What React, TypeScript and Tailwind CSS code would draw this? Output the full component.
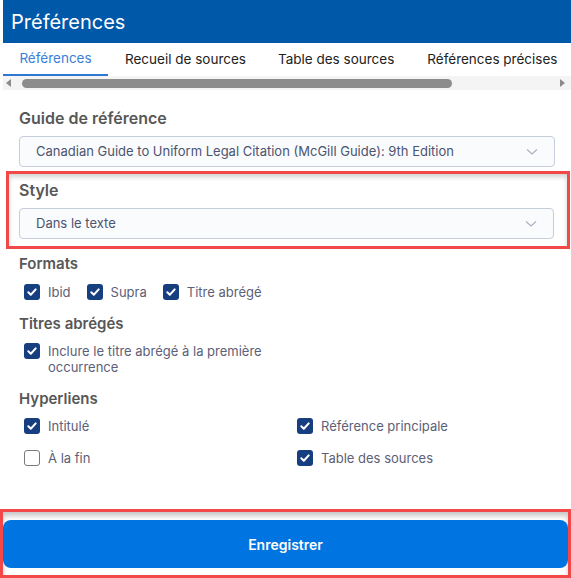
import React from "react";

function Check({ checked }: { checked: boolean }) {
  if (!checked)
    return <span className="block w-[16px] h-[16px] rounded-[3px] border border-[#7a7a7a] bg-white shrink-0" />;
  return (
    <span className="w-[16px] h-[16px] rounded-[3px] bg-[#173f80] shrink-0 flex items-center justify-center">
      <svg width="12" height="12" viewBox="0 0 12 12">
        <path d="M2.3 6.3 L4.8 8.7 L9.7 3.4" fill="none" stroke="white" strokeWidth="2" strokeLinecap="round" strokeLinejoin="round" />
      </svg>
    </span>
  );
}

function CB({ checked, label, className = "" }: { checked: boolean; label: React.ReactNode; className?: string }) {
  return (
    <label className={"flex items-start gap-[8px] text-[13px] leading-[16px] text-[#5c6078] " + className}>
      <span className="block shrink-0"><Check checked={checked} /></span>
      <span>{label}</span>
    </label>
  );
}

function Select({ value }: { value: string }) {
  return (
    <div className="h-[31px] rounded-[4px] border border-[#c6cedb] bg-[#fafbfc] flex items-center justify-between pl-[16px] pr-[16px] text-[13px] text-[#4b5470]">
      <span>{value}</span>
      <svg width="12" height="8" viewBox="0 0 12 8">
        <path d="M1 1.5 L6 6 L11 1.5" fill="none" stroke="#a8b0bf" strokeWidth="1.2" />
      </svg>
    </div>
  );
}

export default function App() {
  return (
    <div className="w-[571px] h-[578px] bg-white flex flex-col overflow-hidden" style={{ fontFamily: "Inter, 'Noto Sans', sans-serif" }}>
      <div className="ml-[3px] h-[43px] bg-[#0058a8] flex items-center pl-[8px] text-white text-[20px] leading-none">
        Préférences
      </div>
      <div className="ml-[3px] h-[33px] flex items-stretch text-[13.5px] text-[#222]">
        <div className="w-[105px] flex items-center justify-center text-[#3b80d8] border-b-2 border-[#2f78d2]">Références</div>
        <div className="ml-[17px] flex items-center">Recueil de sources</div>
        <div className="ml-[32px] flex items-center">Table des sources</div>
        <div className="ml-[33px] flex items-center">Références précises</div>
      </div>
      <div className="ml-[3px] h-[14px] bg-[#f4f4f4] flex items-center px-[2px]">
        <svg width="6" height="8" viewBox="0 0 6 8" className="ml-[1px]"><path d="M5 0 L0 4 L5 8 Z" fill="#8a8a8a" /></svg>
        <div className="ml-[10px] w-[430px] h-[9px] rounded-full bg-[#8c8c8c]" />
        <div className="flex-1" />
        <svg width="6" height="8" viewBox="0 0 6 8" className="mr-[3px]"><path d="M0 0 L5 4 L0 8 Z" fill="#8a8a8a" /></svg>
      </div>

      <div className="pl-[19px] pr-[16px] pt-[18px]">
        <div className="text-[16px] font-semibold text-[#575757] leading-[20px]">Guide de référence</div>
        <div className="mt-[8px]">
          <Select value="Canadian Guide to Uniform Legal Citation (McGill Guide): 9th Edition" />
        </div>
      </div>

      <div className="ml-[6px] mr-[1px] mt-[4px] border-[3px] border-[#f24848] shadow-[inset_0_3px_5px_rgba(0,0,0,0.18)] pl-[10px] pr-[13px] pt-[6px] pb-[7px]">
        <div className="text-[16px] font-semibold text-[#575757] leading-[20px]">Style</div>
        <div className="mt-[8px]">
          <Select value="Dans le texte" />
        </div>
      </div>

      <div className="pl-[19px] pr-[16px] pt-[5px]">
        <div className="text-[15px] font-semibold text-[#575757] leading-[20px]">Formats</div>
        <div className="mt-[10px] pl-[5px] flex items-center gap-[16px]">
          <CB checked label="Ibid" />
          <CB checked label="Supra" />
          <CB checked label="Titre abrégé" />
        </div>
        <div className="mt-[14px] text-[15px] font-semibold text-[#575757] leading-[20px]">Titres abrégés</div>
        <div className="mt-[9px] pl-[5px] w-[260px]">
          <CB checked label="Inclure le titre abrégé à la première occurrence" />
        </div>
        <div className="mt-[14px] text-[15px] font-semibold text-[#575757] leading-[20px]">Hyperliens</div>
        <div className="mt-[9px] pl-[5px] grid grid-cols-[273px_1fr] gap-y-[16px]">
          <CB checked label="Intitulé" />
          <CB checked label="Référence principale" />
          <CB checked={false} label="À la fin" />
          <CB checked label="Table des sources" />
        </div>
      </div>

      <div className="flex-1" />
      <div className="h-[69px] border-[3px] border-[#f24848] shadow-[inset_0_4px_5px_rgba(0,0,0,0.22)] pt-[8px] pb-[7px]">
        <div className="h-full rounded-[8px] bg-[#0074e0] flex items-center justify-center text-white text-[14px] font-semibold">
          Enregistrer
        </div>
      </div>
    </div>
  );
}
